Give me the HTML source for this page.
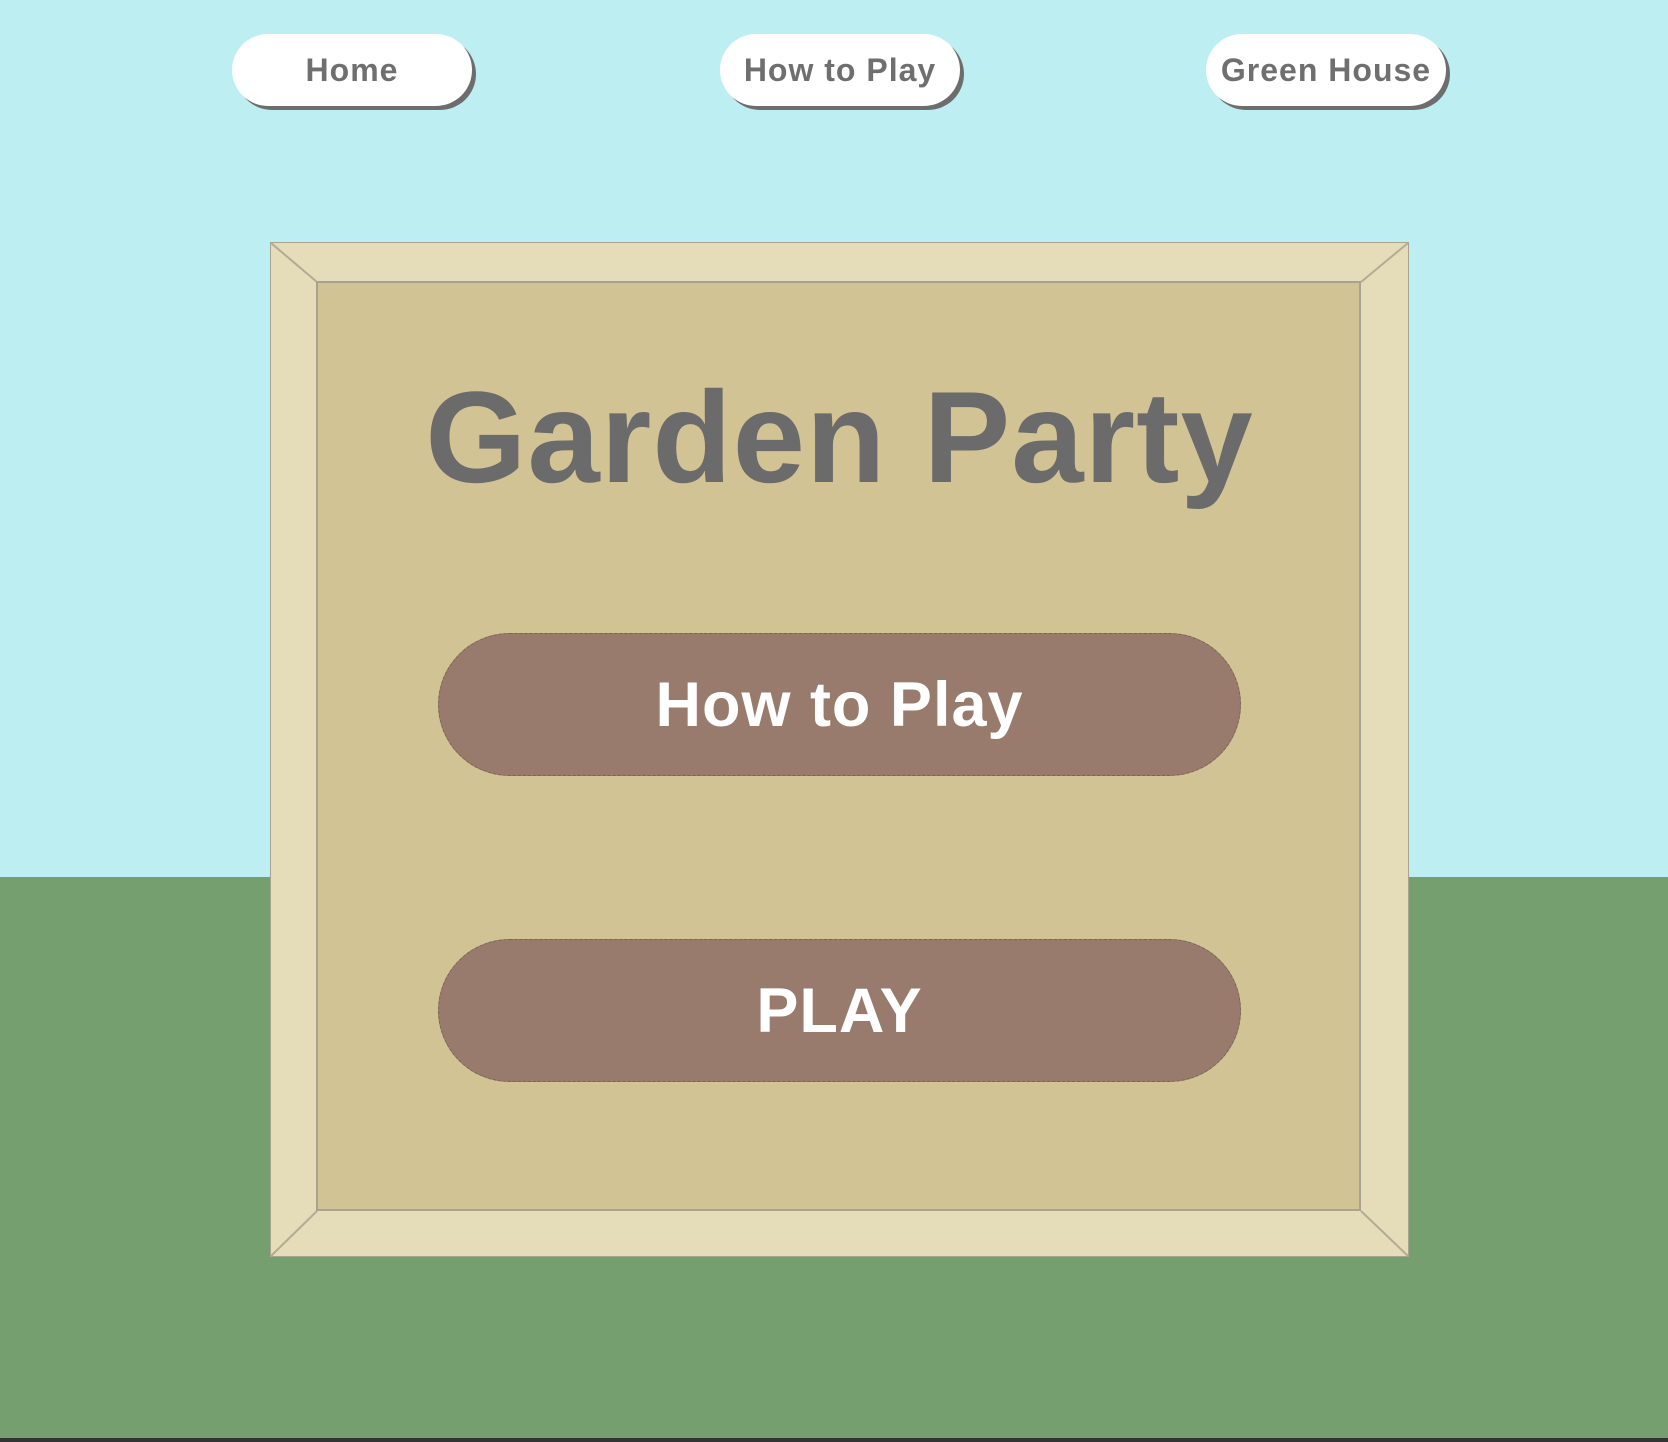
<!DOCTYPE html>
<html><head><style>
body{margin:0;width:1668px;height:1442px;position:relative;overflow:hidden;background:#bdeef2;font-family:"Liberation Sans",sans-serif;font-weight:bold}
.ground{position:absolute;left:0;top:877px;width:1668px;height:561px;background:#769f70}
.strip{position:absolute;left:0;top:1438px;width:1668px;height:4px;background:#333}
.nav{position:absolute;top:34px;height:72px;width:240px;background:#fff;border-radius:36px;box-shadow:4px 4px 0 #6d6d6d;color:#6f6f6f;font-size:32px;display:flex;align-items:center;justify-content:center;letter-spacing:1px}
.frame{position:absolute;left:270px;top:242px;width:1139px;height:1015px;background:#e5dcb9;border:1px solid #a8a290;box-sizing:border-box}
.inner{position:absolute;left:316px;top:281px;width:1045px;height:930px;background:#d1c393;border:2px solid #a8a290;box-sizing:border-box}
h1{position:absolute;left:270px;width:1139px;top:362px;margin:0;text-align:center;font-size:130px;color:#6b6b6b;line-height:150px;letter-spacing:1px}
.btn{position:absolute;left:438px;width:803px;height:143px;background:#987b6c;border:1px dashed #7a6256;border-radius:72px;box-sizing:border-box;display:flex;align-items:center;justify-content:center;color:#fff;font-size:63px;letter-spacing:1px}
svg{position:absolute;left:0;top:0}
</style></head><body>
<div class="ground"></div><div class="strip"></div>
<div class="nav" style="left:232px">Home</div>
<div class="nav" style="left:720px">How to Play</div>
<div class="nav" style="left:1206px">Green House</div>
<div class="frame"></div>
<svg width="1668" height="1442"><g stroke="#b3ab93" stroke-width="2"><line x1="271" y1="243" x2="317" y2="282"/><line x1="1408" y1="243" x2="1361" y2="282"/><line x1="271" y1="1256" x2="317" y2="1211"/><line x1="1408" y1="1256" x2="1361" y2="1211"/></g></svg>
<div class="inner"></div>
<h1>Garden Party</h1>
<div class="btn" style="top:633px">How to Play</div>
<div class="btn" style="top:939px">PLAY</div>
</body></html>
